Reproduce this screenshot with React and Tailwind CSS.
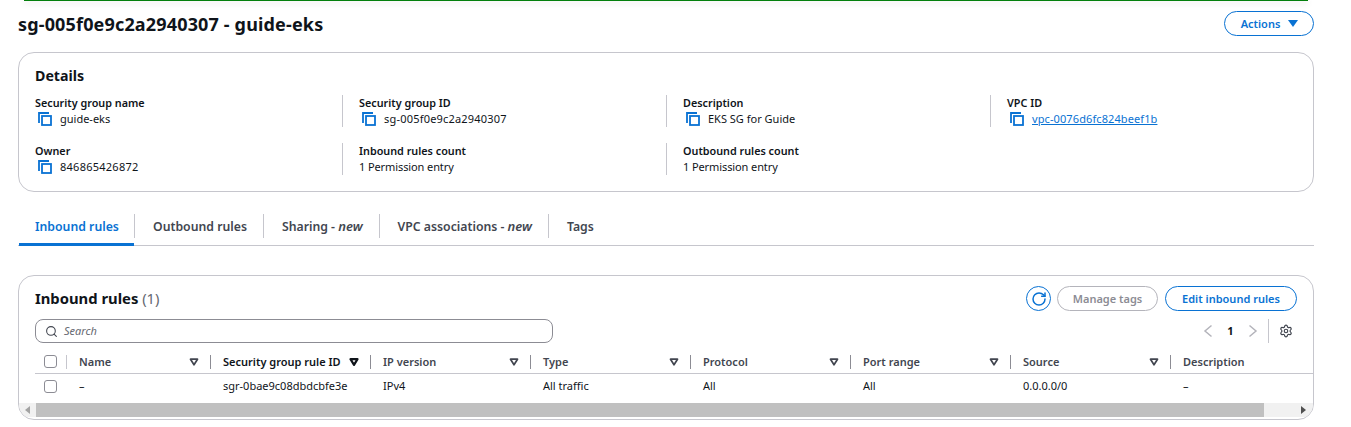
import React from 'react';
import { Search, RotateCw, Settings } from 'lucide-react';

const font = 'font-["Noto_Sans","Open_Sans",sans-serif]';

const CopyIcon = () => (
  <svg width="14" height="14" viewBox="0 0 14 14" fill="none" className="shrink-0 text-[#0972d3]" stroke="currentColor" strokeWidth="1.8">
    <path d="M1 11V1h10" />
    <rect x="4" y="4" width="9" height="9" />
  </svg>
);

const SortIcon = ({ active }) => (
  <svg width="10" height="8" viewBox="0 0 10 8" className={active ? 'text-[#0f141a]' : 'text-[#424650]'}>
    <path d="M1.5 1.2h7L5 6.8z" fill="none" stroke="currentColor" strokeWidth={active ? 2.2 : 1.7} strokeLinejoin="round" />
  </svg>
);

const Chevron = ({ d }) => (
  <svg width="20" height="20" viewBox="0 0 20 20" fill="none" stroke="currentColor" strokeWidth="1.5">
    <path d={d} />
  </svg>
);

const Field = ({ label, value, copy, link, first, valueClass }) => (
  <div className={`flex h-8 flex-col justify-between ${first ? '' : 'border-l border-[#c6c6cd] pl-4'}`}>
    <div className="text-[10.8px] leading-4 font-semibold text-[#0f141a]">{label}</div>
    <div className="flex h-4 items-center gap-2 text-[11px] leading-4 text-[#0f141a]">
      {copy && <span className="ml-[3px] flex"><CopyIcon /></span>}
      {link ? <span className={`text-[#0972d3] underline ${valueClass || ''}`}>{value}</span> : <span className={valueClass}>{value}</span>}
    </div>
  </div>
);

const columns = [
  { name: 'Name', value: '–', width: 'w-[144px]' },
  { name: 'Security group rule ID', value: 'sgr-0bae9c08dbdcbfe3e', width: 'w-[160px]', active: true },
  { name: 'IP version', value: 'IPv4', width: 'w-[160px]' },
  { name: 'Type', value: 'All traffic', width: 'w-[160px]' },
  { name: 'Protocol', value: 'All', width: 'w-[160px]' },
  { name: 'Port range', value: 'All', width: 'w-[160px]' },
  { name: 'Source', value: '0.0.0.0/0', width: 'w-[160px]' },
  { name: 'Description', value: '–', width: 'w-[160px]', last: true },
];

const tabs = [
  { label: 'Outbound rules' },
  { label: 'Sharing - ', tag: 'new' },
  { label: 'VPC associations - ', tag: 'new' },
  { label: 'Tags' },
];

export default function App() {
  return (
    <div className={`${font} h-[427px] w-[1351px] overflow-hidden bg-white pl-[18px] pr-[37px] text-[#0f141a]`}>
      {/* flash bar edge */}
      <div className="mx-[6px] mb-px h-px bg-[#037f0c] shadow-[0_2px_6px_rgba(0,0,0,0.25)]" />

      {/* Header */}
      <div className="flex h-[34px] items-start justify-between pt-[9px]">
        <h1 className="pt-[2px] text-[18px] leading-[22px] font-bold tracking-[0.16px]">sg-005f0e9c2a2940307 - guide-eks</h1>
        <button className="flex h-[25px] w-[90px] items-center justify-center gap-2 rounded-full border border-[#0972d3] pt-px pl-px text-[11px] font-semibold text-[#0972d3]">
          Actions
          <svg width="10" height="7" viewBox="0 0 10 7" className="-mt-px"><path d="M0 0h10L5 7z" fill="currentColor" /></svg>
        </button>
      </div>

      {/* Details */}
      <section className="mt-[16px] h-[140px] rounded-2xl border border-[#c6c6cd] px-4 pt-[13px]">
        <h2 className="text-[14.2px] leading-[20px] font-bold">Details</h2>
        <div className="mt-[9px] grid grid-cols-[307px_324px_324px_1fr] gap-y-4">
          <Field first label="Security group name" value="guide-eks" copy />
          <Field label="Security group ID" value="sg-005f0e9c2a2940307" copy valueClass="tracking-[0.2px]" />
          <Field label="Description" value="EKS SG for Guide" copy />
          <Field label="VPC ID" value="vpc-0076d6fc824beef1b" copy link valueClass="tracking-[0.1px]" />
          <Field first label="Owner" value="846865426872" copy valueClass="tracking-[0.25px]" />
          <Field label="Inbound rules count" value="1 Permission entry" valueClass="tracking-[-0.1px]" />
          <Field label="Outbound rules count" value="1 Permission entry" valueClass="tracking-[-0.1px]" />
        </div>
      </section>

      {/* Tabs */}
      <div className="mt-[22px] flex h-[32px] items-start border-b border-[#c6c6cd] text-[12.25px] font-semibold text-[#424650]">
        <div className="-mb-px ml-px h-[32px] w-[115px] border-b-[3px] border-[#0972d3] pl-4 leading-[26px] text-[#0972d3]">Inbound rules</div>
        {tabs.map((tab) => (
          <div key={tab.label} className="flex h-[24px] items-center border-l border-[#c6c6cd] pt-[2px] pr-[16px] pl-[18px]">
            <span className="whitespace-pre">{tab.label}</span>
            {tab.tag && <em className="text-[13px] font-semibold">{tab.tag}</em>}
          </div>
        ))}
      </div>

      {/* Rules table */}
      <section className="mt-[29px] h-[145px] overflow-hidden rounded-2xl border border-[#c6c6cd]">
        <div className="flex items-center justify-between pl-4 pr-4 pt-[10px]">
          <h2 className="pb-px text-[14.8px] leading-[23px] font-bold">
            Inbound rules <span className="font-normal text-[#656871]">(1)</span>
          </h2>
          <div className="flex items-center">
            <button className="flex h-[25px] w-[25px] items-center justify-center rounded-full border border-[#0972d3] text-[#0972d3]">
              <RotateCw size={16} strokeWidth={2.25} />
            </button>
            <button className="ml-[6px] h-[25px] w-[101px] rounded-full border border-[#b4b4bb] pt-px text-[11px] font-semibold text-[#8c8c94]">Manage tags</button>
            <button className="ml-[7px] h-[25px] w-[132px] rounded-full border border-[#0972d3] pt-px text-[11px] font-semibold text-[#0972d3]">Edit inbound rules</button>
          </div>
        </div>

        <div className="mt-[8px] flex items-center justify-between pl-4 pr-4">
          <div className="flex h-[24px] w-[518px] items-center gap-[6px] rounded-lg border border-[#8c8c94] px-[9px] text-[#656871]">
            <Search size={13} strokeWidth={2} className="text-[#424650]" />
            <span className="text-[11px] italic">Search</span>
          </div>
          <div className="flex h-[24px] items-center text-[#b4b4bb]">
            <Chevron d="M13.5 4.5 7 10l6.5 5.5" />
            <span className="ml-[9px] mr-[9px] w-[7px] text-center text-[11px] font-bold text-[#0f141a]">1</span>
            <Chevron d="M6.5 4.5 13 10l-6.5 5.5" />
            <span className="ml-[5px] h-[24px] border-l border-[#c6c6cd]" />
            <Settings size={14} strokeWidth={2} className="ml-[10px] mr-[4px] text-[#424650]" />
          </div>
        </div>

        {/* Columns */}
        <div className="mt-[7px] ml-4 flex h-[24px] items-center border-b border-[#c6c6cd] text-[11px] font-semibold text-[#424650]">
          <div className="flex w-[32px] shrink-0 items-center pl-[9px]">
            <span className="h-[13px] w-[13px] rounded-[3px] border border-[#8c8c94]" />
            <span className="ml-[9px] h-[14px] border-l border-[#c6c6cd]" />
          </div>
          {columns.map((col) => (
            <div key={col.name} className={`${col.width} flex shrink-0 items-center justify-between pl-[12px] whitespace-nowrap ${col.active ? 'text-[#0f141a]' : ''}`}>
              <span className="pt-px">{col.name}</span>
              {!col.last && (
                <span className="flex items-center gap-[11px]">
                  <SortIcon active={col.active} />
                  <span className="h-[14px] border-l border-[#8c8c94]" />
                </span>
              )}
            </div>
          ))}
        </div>
        <div className="ml-4 flex h-[29px] items-center pb-[4px] text-[11px]">
          <div className="flex w-[32px] shrink-0 pl-[9px]">
            <span className="h-[13px] w-[13px] rounded-[3px] border border-[#8c8c94]" />
          </div>
          {columns.map((col) => (
            <div key={col.name} className={`${col.width} shrink-0 pl-[12px]`}>{col.value}</div>
          ))}
        </div>

        {/* Scrollbar */}
        <div className="flex h-[14px] items-center bg-[#f1f1f1]">
          <span className="flex w-[17px] justify-center">
            <svg width="5" height="8" viewBox="0 0 5 8"><path d="M5 0v8L0 4z" fill="#a3a3a3" /></svg>
          </span>
          <div className="h-full w-[1228px] bg-[#c0c0c0]" />
          <span className="flex flex-1 justify-end pr-[7px]">
            <svg width="5" height="8" viewBox="0 0 5 8"><path d="M0 0v8l5-4z" fill="#505050" /></svg>
          </span>
        </div>
      </section>
    </div>
  );
}
